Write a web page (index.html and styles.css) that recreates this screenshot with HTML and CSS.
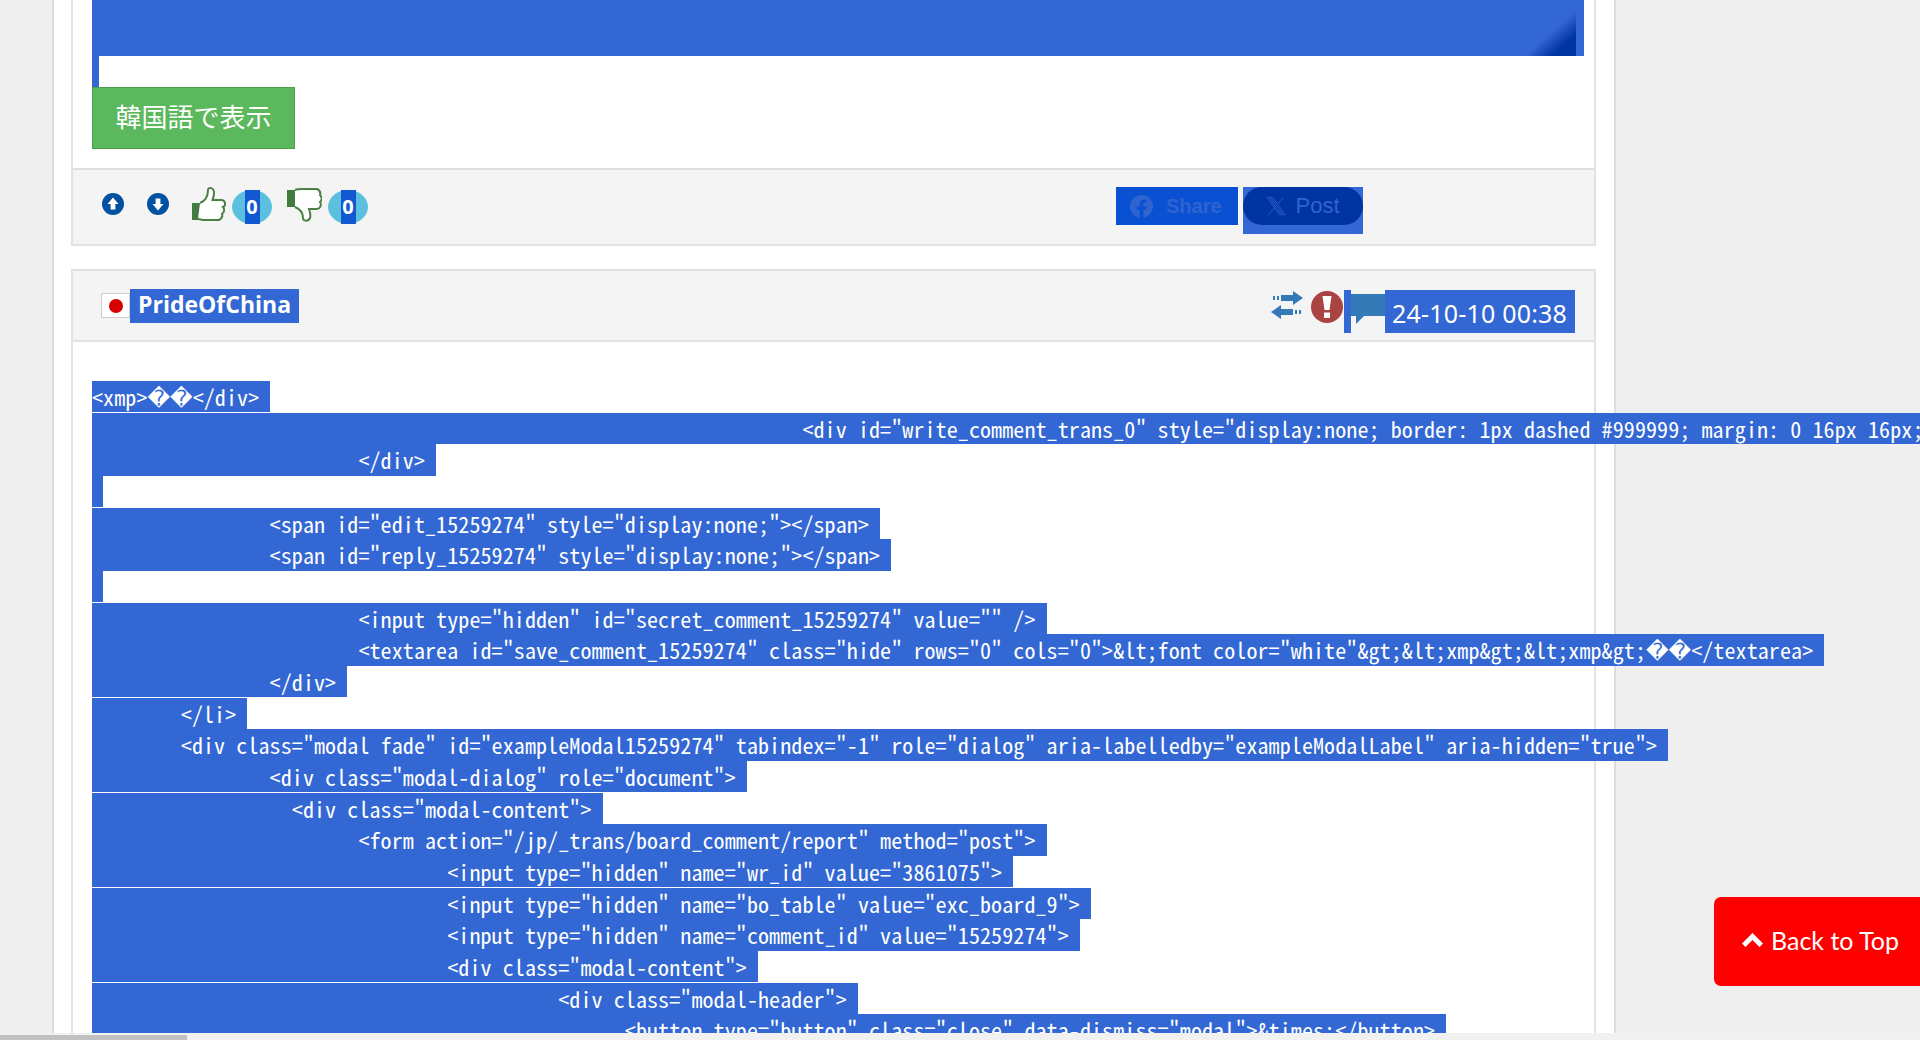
FILE: index.html
```html
<!DOCTYPE html>
<html lang="ja">
<head>
<meta charset="utf-8">
<title>Comment</title>
<link rel="stylesheet" href="styles.css">
</head>
<body>
<div class="viewport">
  <div class="wrap">
    <section class="panel first">
      <div class="panel-body">
        <div class="selected-image"><div class="corner"></div></div>
        <div class="caret"></div>
        <button class="translate">韓国語で表示</button>
      </div>
      <div class="toolbar">
        <svg class="nav-icon" viewBox="0 0 22 22"><circle cx="11" cy="11" r="11" fill="#00519f"/><path d="M11 4.500 16.500 11H13.400V16.500H8.600V11H5.500Z" fill="#fff"/></svg>
        <svg class="nav-icon second" viewBox="0 0 22 22"><circle cx="11" cy="11" r="11" fill="#00519f"/><path d="M11 17.500 5.500 11H8.600V5.500H13.400V11H16.500Z" fill="#fff"/></svg>
        <svg class="thumb" viewBox="0 0 35 35"><path d="M1 16H9V33H1Z" fill="#417d3f"/><path d="M9 16C14 14 17 9 17 3C17 0 23 0 23 6C23 9 22 11 21.500 13H30C35 13 35 19 32 20C34 22 33 26 31 27C32 30 30 32 28 33H14C11 33 9 32 7 32" fill="#fff" stroke="#4d7f46" stroke-width="2"/></svg>
        <span class="badge"><b>0</b></span>
        <svg class="thumb down" viewBox="0 0 35 35"><path d="M0 3H8V20H0Z" fill="#417d3f"/><path d="M8 3C10 2 13 2 16 2H30C32 3 34 5 33 8C35 10 35 13 33 15C35 18 33 22 30 22H22C23 25 24 28 23 31C21 35 16 34 16 31C16 26 13 22 8 20" fill="#fff" stroke="#4d7f46" stroke-width="2"/></svg>
        <span class="badge"><b>0</b></span>
        <div class="share">
          <span class="fb">
            <svg class="fb-logo" viewBox="0 0 24 24"><path d="M24 12a12 12 0 1 0-13.900 11.900v-8.400H7.100V12h3V9.400c0-3 1.800-4.700 4.500-4.700 1.300 0 2.700.2 2.700.2v3h-1.500c-1.500 0-2 .9-2 1.900V12h3.400l-.5 3.500h-2.900v8.400A12 12 0 0 0 24 12Z" fill="#2f63d0"/></svg>
            Share
          </span>
          <span class="x-select">
            <span class="x-btn">
              <svg class="x-logo" viewBox="0 0 24 24"><path d="M1 1.500H8L23 22.500H16ZM4.500 3.300 17 20.700H19.500L7 3.300ZM21 1.500 14 9.500M3 22.500 10.500 14" fill="none" stroke="#2f63d0" stroke-width="1"/></svg>
              Post
            </span>
          </span>
        </div>
      </div>
    </section>

    <section class="panel second-panel">
      <header class="comment-head">
        <span class="flag"><i></i></span>
        <span class="author">PrideOfChina</span>
        <div class="meta">
          <svg class="swap" viewBox="0 0 34 28"><path d="M33 7 23 0V4H11V10H23V14ZM1 21 11 14V18H23V24H11V28Z" fill="#337ab7"/><path d="M3 5H5V9H3ZM7 5H9V9H7ZM25 19H27V23H25ZM29 19H31V23H29Z" fill="#337ab7"/></svg>
          <svg class="alert" viewBox="0 0 32 32"><circle cx="16" cy="16" r="16" fill="#a94442"/><path d="M11.500 5H20.500L18.500 19H13.500ZM13 21.500H19V27H13Z" fill="#fff"/></svg>
          <span class="meta-caret"></span>
          <svg class="bubble" viewBox="0 0 34 33"><path d="M0 2H34V24H13L5 32V24H0Z" fill="#337ab7"/></svg>
          <span class="date">24-10-10 00:38</span>
        </div>
      </header>
      <div class="code">
        <div class="ln"><span class="sel">&lt;xmp&gt;<span class="bad">��</span>&lt;/div&gt; </span></div>
        <div class="ln"><span class="sel">								&lt;div id="write_comment_trans_0" style="display:none; border: 1px dashed #999999; margin: 0 16px 16px;"&gt; </span></div>
        <div class="ln"><span class="sel">			&lt;/div&gt; </span></div>
        <div class="ln"><span class="sel"> </span></div>
        <div class="ln"><span class="sel">		&lt;span id="edit_15259274" style="display:none;"&gt;&lt;/span&gt; </span></div>
        <div class="ln"><span class="sel">		&lt;span id="reply_15259274" style="display:none;"&gt;&lt;/span&gt; </span></div>
        <div class="ln"><span class="sel"> </span></div>
        <div class="ln"><span class="sel">			&lt;input type="hidden" id="secret_comment_15259274" value="" /&gt; </span></div>
        <div class="ln"><span class="sel">			&lt;textarea id="save_comment_15259274" class="hide" rows="0" cols="0"&gt;&amp;lt;font color="white"&amp;gt;&amp;lt;xmp&amp;gt;&amp;lt;xmp&amp;gt;<span class="bad">��</span>&lt;/textarea&gt; </span></div>
        <div class="ln"><span class="sel">		&lt;/div&gt; </span></div>
        <div class="ln"><span class="sel">	&lt;/li&gt; </span></div>
        <div class="ln"><span class="sel">	&lt;div class="modal fade" id="exampleModal15259274" tabindex="-1" role="dialog" aria-labelledby="exampleModalLabel" aria-hidden="true"&gt; </span></div>
        <div class="ln"><span class="sel">		&lt;div class="modal-dialog" role="document"&gt; </span></div>
        <div class="ln"><span class="sel">		  &lt;div class="modal-content"&gt; </span></div>
        <div class="ln"><span class="sel">			&lt;form action="/jp/_trans/board_comment/report" method="post"&gt; </span></div>
        <div class="ln"><span class="sel">				&lt;input type="hidden" name="wr_id" value="3861075"&gt; </span></div>
        <div class="ln"><span class="sel">				&lt;input type="hidden" name="bo_table" value="exc_board_9"&gt; </span></div>
        <div class="ln"><span class="sel">				&lt;input type="hidden" name="comment_id" value="15259274"&gt; </span></div>
        <div class="ln"><span class="sel">				&lt;div class="modal-content"&gt; </span></div>
        <div class="ln"><span class="sel">					  &lt;div class="modal-header"&gt; </span></div>
        <div class="ln"><span class="sel">						&lt;button type="button" class="close" data-dismiss="modal"&gt;&amp;times;&lt;/button&gt; </span></div>
      </div>
    </section>
  </div>
</div>
<div class="hscroll"><div class="hthumb"></div></div>
<a class="back-top" href="#top">
  <svg class="chev" viewBox="0 0 21 14"><path d="M10.500 0 21 10.500 17.500 14 10.500 7 3.500 14 0 10.500Z" fill="#fff"/></svg>
  Back to Top
</a>
</body>
</html>
```
FILE: styles.css
```css
html, body {
  margin: 0;
  height: 100%;
  overflow: hidden;
}
body {
  display: flex;
  flex-direction: column;
  background: #efefef;
  font-family: "Noto Sans", "Liberation Sans", sans-serif;
}
.viewport {
  flex: 1;
  min-height: 0;
  overflow: hidden;
  padding-left: 52px;
}
.wrap {
  box-sizing: border-box;
  width: 1564px;
  height: 100%;
  background: #fff;
  border-left: 2px solid #ddd;
  border-right: 2px solid #ddd;
  padding: 0 18px 0 17px;
}
.panel {
  border: solid #e2e2e2;
  border-width: 0 2px 2px;
  background: #fff;
}
.panel-body {
  padding: 0 10px 19px 19px;
  border-bottom: 2px solid #dedede;
}
.selected-image {
  display: flex;
  justify-content: flex-end;
  height: 56px;
  padding-right: 8px;
  background: #3367d3;
}
.corner {
  width: 54px;
  height: 48px;
  margin-top: 8px;
  background: linear-gradient(to bottom right, transparent 52%, #0034a3 78%);
}
.caret {
  width: 7px;
  height: 31px;
  background: #3367d3;
}
.translate {
  display: block;
  width: 203px;
  height: 62px;
  padding: 0 0 5px;
  border: 1px solid #4c9f4c;
  background: #5cb85c;
  color: #fff;
  font: 26px "Noto Sans CJK JP", sans-serif;
}
.toolbar {
  display: flex;
  align-items: flex-start;
  height: 74px;
  padding: 17px 0 0 29px;
  background: #f4f4f4;
  box-sizing: border-box;
}
.nav-icon {
  width: 22px;
  height: 22px;
  margin-top: 6px;
}
.nav-icon.second {
  margin-left: 23px;
}
.thumb {
  width: 35px;
  height: 35px;
  margin-left: 22px;
}
.thumb.down {
  margin-left: 15px;
}
.badge {
  display: flex;
  justify-content: center;
  width: 40px;
  height: 34px;
  margin: 3px 0 0 6px;
  border-radius: 50%;
  background: #5bc0de;
}
.badge b {
  width: 15px;
  background: #1259d1;
  color: #fff;
  font: bold 20px/34px "Noto Sans", sans-serif;
  text-align: center;
}
.share {
  display: flex;
  gap: 5px;
  margin-left: auto;
  margin-right: 231px;
}
.fb {
  display: flex;
  align-items: center;
  gap: 13px;
  box-sizing: border-box;
  width: 122px;
  height: 38px;
  padding-left: 14px;
  background: #0a50d2;
  color: #2f63d0;
  font: bold 20px "Liberation Sans", sans-serif;
}
.fb-logo {
  width: 23px;
  height: 23px;
}
.x-select {
  display: block;
  width: 120px;
  height: 47px;
  background: #3367d3;
}
.x-btn {
  display: flex;
  align-items: center;
  justify-content: center;
  gap: 9px;
  height: 38px;
  border-radius: 19px;
  background: #0034a3;
  color: #2f63d0;
  font: 22px "Liberation Sans", sans-serif;
}
.x-logo {
  width: 20px;
  height: 20px;
}
.second-panel {
  margin-top: 23px;
  border-top-width: 2px;
}
.comment-head {
  display: flex;
  align-items: flex-start;
  box-sizing: border-box;
  height: 71px;
  padding: 18px 0 0 28px;
  background: #f4f4f4;
  border-bottom: 2px solid #e2e2e2;
}
.flag {
  display: flex;
  align-items: center;
  justify-content: center;
  box-sizing: border-box;
  width: 29px;
  height: 25px;
  margin-top: 4px;
  background: #fff;
  border: 1px solid #ccc;
}
.flag i {
  width: 14px;
  height: 14px;
  border-radius: 50%;
  background: #d80000;
}
.author {
  height: 34px;
  padding: 0 8px;
  background: #3367d3;
  color: #fff;
  font: bold 23px/30px "Open Sans", sans-serif;
}
.meta {
  display: flex;
  align-items: flex-start;
  margin-left: auto;
  margin-right: 19px;
}
.swap {
  width: 34px;
  height: 28px;
  margin-top: 2px;
}
.alert {
  width: 32px;
  height: 32px;
  margin: 2px 0 0 7px;
}
.meta-caret {
  width: 7px;
  height: 43px;
  margin: 1px 0 0 1px;
  background: #3367d3;
}
.bubble {
  width: 34px;
  height: 33px;
  margin-top: 3px;
}
.date {
  box-sizing: border-box;
  width: 190px;
  height: 43px;
  margin-top: 1px;
  padding: 8px 7px 0 7px;
  background: #3367d3;
  color: #fff;
  font: 25px/31px "Noto Sans", sans-serif;
  letter-spacing: .2px;
  white-space: nowrap;
}
.code {
  padding: 39px 0 0 19px;
  font: 22px "Noto Sans Mono CJK JP", "Liberation Mono", monospace;
  letter-spacing: .1px;
  color: #fff;
}
.ln {
  height: 31.68px;
}
.sel {
  display: inline-block;
  height: 31.28px;
  line-height: 31px;
  background: #3367d3;
  vertical-align: top;
  white-space: pre;
  tab-size: 8;
}
.bad {
  font-family: "DejaVu Sans", sans-serif;
  font-size: 22px;
  letter-spacing: 0;
}
.hscroll {
  flex: none;
  height: 7px;
  background: #f1f1f1;
  display: flex;
  align-items: flex-end;
}
.hthumb {
  width: 187px;
  height: 5px;
  background: #c1c1c1;
}
.back-top {
  position: fixed;
  left: 1714px;
  top: 897px;
  box-sizing: border-box;
  display: flex;
  align-items: center;
  gap: 8px;
  width: 220px;
  height: 89px;
  padding: 0 0 3px 28px;
  border-radius: 7px;
  background: #f00;
  color: #fff;
  font: 25px Lato, sans-serif;
  text-decoration: none;
}
.chev {
  width: 21px;
  height: 14px;
}
```
